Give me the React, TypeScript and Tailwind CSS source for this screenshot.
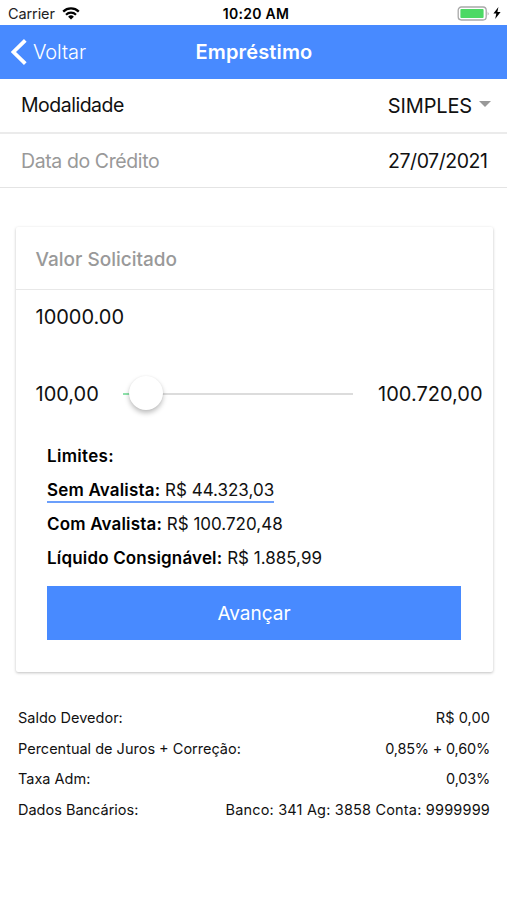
import clsx from 'clsx';

const limits = [
  { label: 'Sem Avalista:', value: 'R$ 44.323,03', selected: true },
  { label: 'Com Avalista:', value: 'R$ 100.720,48', selected: false },
  { label: 'Líquido Consignável:', value: 'R$ 1.885,99', selected: false },
];

const details = [
  { label: 'Saldo Devedor:', value: 'R$ 0,00', valueClass: 'tracking-[0.1px]' },
  { label: 'Percentual de Juros + Correção:', value: '0,85% + 0,60%', valueClass: 'tracking-[-0.2px]' },
  { label: 'Taxa Adm:', value: '0,03%', valueClass: 'tracking-[-0.2px]' },
  { label: 'Dados Bancários:', value: 'Banco: 341 Ag: 3858 Conta: 9999999', valueClass: 'tracking-[0.18px]' },
];

const StatusBar = () => {
  return (
    <div className="grid h-[25px] grid-cols-3 items-center pt-[3px] pr-[6px] pl-2 text-black">
      <div className="flex items-center gap-[7px]">
        <span className="text-[14.5px] leading-none tracking-[-0.1px] text-[#222]">Carrier</span>
        <svg width="18" height="13" viewBox="0 0 18 13" fill="none" stroke="black" className="-mt-0.5">
          <path d="M1.2 4.6a11.2 11.2 0 0 1 15.6 0" strokeWidth="2.3" />
          <path d="M4 7.7a7.2 7.2 0 0 1 10 0" strokeWidth="2.2" />
          <path d="M9 12.6 6.1 9.7a4.2 4.2 0 0 1 5.8 0Z" fill="black" stroke="none" />
        </svg>
      </div>
      <span className="pl-[3px] text-center text-[14px] leading-none font-semibold tracking-[0.3px] whitespace-nowrap">
        10:20 AM
      </span>
      <div className="-mt-0.5 flex items-center justify-end gap-[3px]">
        <svg width="33" height="15" viewBox="0 0 33 15">
          <rect x="1.2" y="1" width="28" height="13" rx="3.2" fill="white" stroke="#a9a9a9" strokeWidth="1.3" />
          <rect x="3.4" y="3" width="23.2" height="9" rx="1" fill="#4cd964" />
          <path d="M30.7 5.4q1.8 2 0 4.2Z" fill="#a9a9a9" />
        </svg>
        <svg width="8" height="12" viewBox="0 0 8 12">
          <path d="M5.4 0 .4 6.6h2.9L2.2 12l5.4-7H4.4Z" fill="black" />
        </svg>
      </div>
    </div>
  );
};

const NavBar = () => {
  return (
    <header className="grid h-[54px] grid-cols-[1fr_auto_1fr] items-center bg-[#488aff] px-[11px] text-white">
      <button className="flex items-center gap-[6px]">
        <svg width="16" height="26" viewBox="0 0 16 26" fill="none" stroke="currentColor" strokeWidth="3.8">
          <path d="M14.3 1.4 2.4 13l11.9 11.6" />
        </svg>
        <span className="text-[20px] leading-none font-light tracking-[-0.1px]">Voltar</span>
      </button>
      <h1 className="pl-px text-[20px] leading-none font-semibold tracking-[0.15px]">Empréstimo</h1>
    </header>
  );
};

const Slider = () => {
  return (
    <div className="relative flex h-9 w-[230px] items-center">
      <div className="h-0.5 w-[7px] bg-[#8ee2ab]" />
      <div className="h-0.5 flex-1 bg-[#dcdcdc]" />
      <div className="absolute top-0 left-[6px] size-[34px] rounded-full bg-white shadow-[0_3px_5px_rgba(0,0,0,0.25),0_0_2px_rgba(0,0,0,0.06)]" />
    </div>
  );
};

const LoanCard = () => {
  return (
    <section className="mr-[14.5px] ml-[15.5px] mt-[39px] h-[445px] rounded-[2px] bg-white shadow-[0_1px_3px_rgba(0,0,0,0.25)]">
      <h2 className="flex h-[63px] items-center border-b border-[#e8e8e8] px-5 pt-[2px] text-[19px] leading-none font-medium text-[#999]">
        Valor Solicitado
      </h2>
      <div className="flex h-[54px] items-center px-5 text-[20px] leading-none">10000.00</div>
      <div className="mt-[32px] flex h-9 items-center justify-between pr-[10px] pl-5 text-[20px] leading-none">
        <span>100,00</span>
        <Slider />
        <span>100.720,00</span>
      </div>
      <div className="pr-8 pl-[31.5px] pt-[28px] text-[17px]">
        <div className="flex h-[33px] items-center font-semibold tracking-[0.3px] text-black">
          Limites:
        </div>
        {limits.map((limit) => (
          <div key={limit.label} className="flex h-[34.2px] items-center pt-px">
            <span
              className={clsx(
                'border-b-2 leading-[22px]',
                limit.selected ? 'border-[#6b9ffb]' : 'border-transparent'
              )}
            >
              <strong className="font-semibold tracking-[0.17px] text-black">{limit.label}</strong>{' '}
              {limit.value}
            </span>
          </div>
        ))}
        <button className="mt-[10px] block h-[54px] w-[414px] bg-[#488aff] pt-1 text-[19px] text-white">
          Avançar
        </button>
      </div>
    </section>
  );
};

const App = () => {
  return (
    <main className="h-[900px] w-[507px] overflow-hidden bg-white font-['Inter',sans-serif] text-[#111]">
      <StatusBar />
      <NavBar />
      <div className="flex h-[55px] items-center justify-between border-b-2 border-[#ebebeb] pr-4 pl-[21px] text-[20px] leading-none">
        <span className="pt-px text-[19.5px] tracking-[-0.5px]">Modalidade</span>
        <span className="flex items-center gap-[7px] tracking-[-0.15px]">
          SIMPLES
          <svg width="12" height="6" viewBox="0 0 12 6" className="mb-1">
            <path d="M0 0h12L6 6Z" fill="#999" />
          </svg>
        </span>
      </div>
      <div className="flex h-[54px] items-center justify-between border-b border-[#e4e4e4] pt-[2px] pr-[19.5px] pl-[21px] leading-none">
        <span className="text-[19.5px] tracking-[-0.4px] text-[#999]">Data do Crédito</span>
        <span className="text-[19.5px] tracking-[-0.45px]">27/07/2021</span>
      </div>
      <LoanCard />
      <dl className="mt-[30.5px] pr-[17px] pl-[18px] text-[14.5px]">
        {details.map((item) => (
          <div key={item.label} className="flex h-[30.6px] items-center justify-between">
            <dt>{item.label}</dt>
            <dd className={item.valueClass}>{item.value}</dd>
          </div>
        ))}
      </dl>
    </main>
  );
};

export default App;
